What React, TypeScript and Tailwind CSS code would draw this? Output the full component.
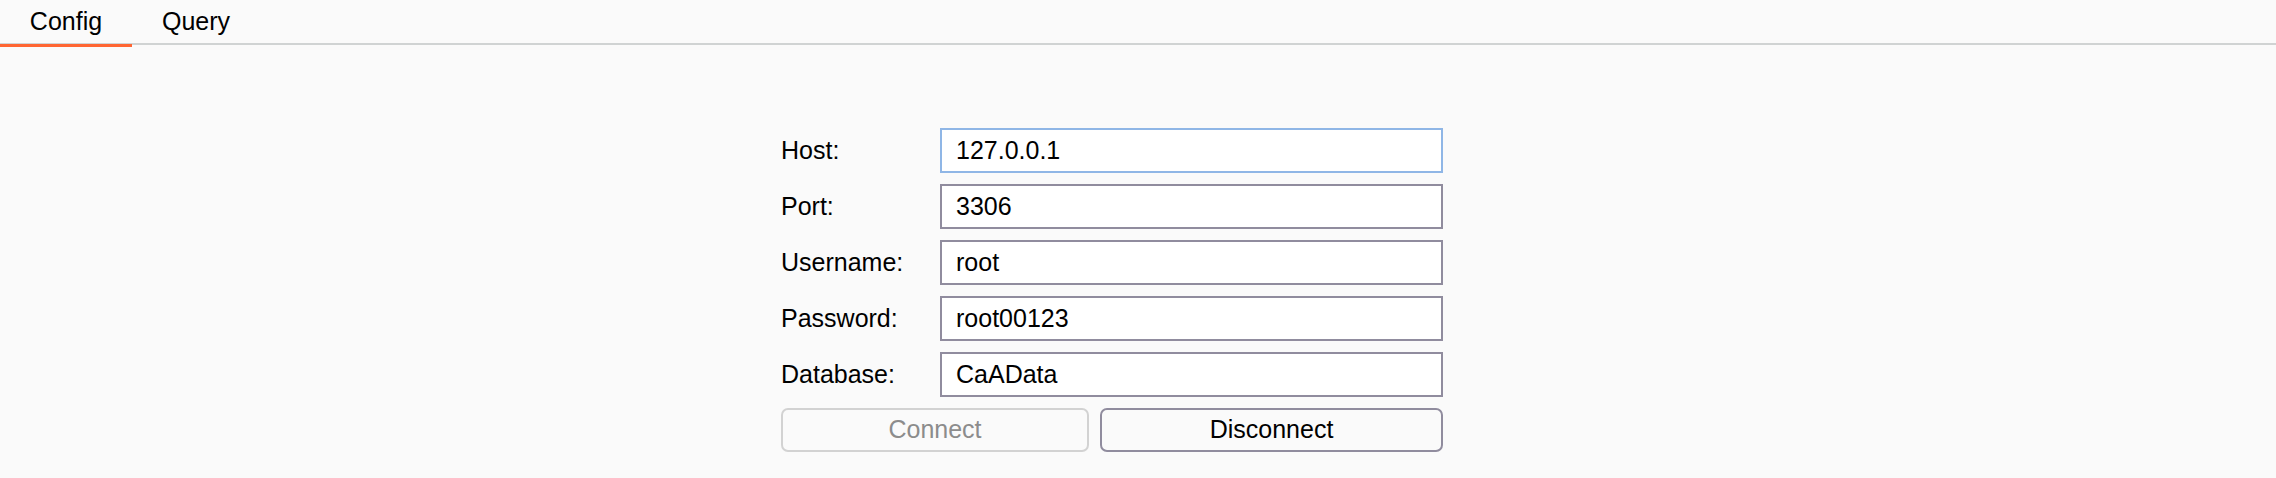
import { useState } from 'react';

const fields = [
  { label: 'Host:', value: '127.0.0.1', focused: true },
  { label: 'Port:', value: '3306' },
  { label: 'Username:', value: 'root' },
  { label: 'Password:', value: 'root00123' },
  { label: 'Database:', value: 'CaAData' },
];

export default function App() {
  const [tab, setTab] = useState('Config');

  return (
    <div className="min-h-screen w-full bg-[#fafafa] text-black font-['Liberation_Sans',Arial,sans-serif]">
      {/* Tabs */}
      <div className="flex h-[45px] border-b-2 border-[#d0d3d3]">
        {['Config', 'Query'].map((t) => (
          <button
            key={t}
            onClick={() => setTab(t)}
            className={`-mb-[2px] flex h-[47px] items-start justify-center pt-[7px] text-[25px] leading-[28px] ${
              t === 'Config' ? 'w-[132px]' : 'w-[128px]'
            } ${tab === t ? 'border-b-[3px] border-[#ff6633]' : ''}`}
          >
            {t}
          </button>
        ))}
      </div>

      {/* Form */}
      <div className="flex pt-[83px] pl-[781px]">
        <div className="flex w-[662px] flex-col gap-[11px]">
          {fields.map((f) => (
            <div key={f.label} className="flex h-[45px] items-center">
              <label className="w-[159px] text-[25px] leading-none">{f.label}</label>
              <input
                readOnly
                value={f.value}
                className={`h-[45px] flex-1 border-2 bg-white px-[14px] text-[25px] outline-none ${
                  f.focused ? 'border-[#8fb6e6]' : 'border-[#908c9e]'
                }`}
              />
            </div>
          ))}
          <div className="flex h-[44px] gap-[11px]">
            <button className="w-[308px] rounded-[7px] border-2 border-[#d2d2d2] bg-[#fafafa] text-[25px] text-[#8c8c8c]">
              Connect
            </button>
            <button className="flex-1 rounded-[7px] border-2 border-[#908c9e] bg-[#fafafa] text-[25px] text-black">
              Disconnect
            </button>
          </div>
        </div>
      </div>
    </div>
  );
}
